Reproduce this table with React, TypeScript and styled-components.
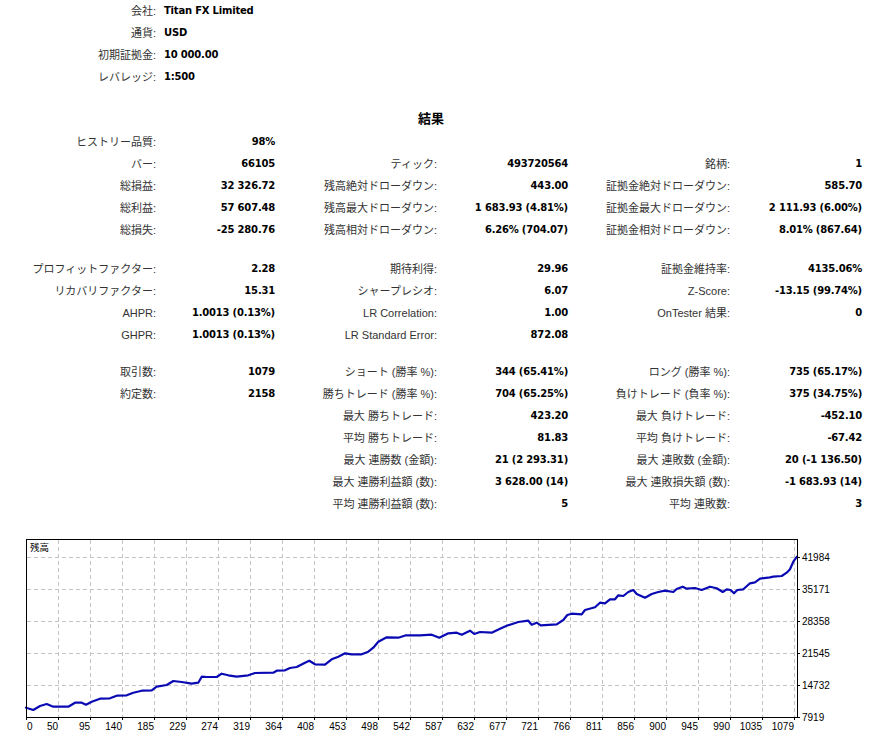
import React from "react";
import styled, { createGlobalStyle } from "styled-components";

const GlobalStyle = createGlobalStyle`
  html, body { margin: 0; padding: 0; background: #ffffff; }
  body { width: 890px; height: 745px; overflow: hidden; }
`;

const Page = styled.div`
  width: 890px;
  font-family: "Liberation Sans", "Noto Sans CJK JP", sans-serif;
  font-size: 11px;
  color: #000;
`;

const InfoGrid = styled.div`
  display: grid;
  grid-template-columns: 156px auto;
  column-gap: 8px;
  grid-auto-rows: 22px;
  align-items: center;
`;

const Label = styled.div`
  text-align: right;
  white-space: nowrap;
  color: #333;
  font-family: "Liberation Sans", "Noto Sans CJK JP", sans-serif;
  font-size: 11px;
  line-height: 22px;
  height: 22px;
`;

const Value = styled.div<{ $left?: boolean }>`
  text-align: ${(p) => (p.$left ? "left" : "right")};
  white-space: nowrap;
  color: #000;
  font-family: "DejaVu Sans", "Noto Sans CJK JP", sans-serif;
  font-weight: bold;
  font-size: 10px;
  letter-spacing: -0.2px;
  line-height: 22px;
  height: 22px;
`;

const Heading = styled.div`
  width: 862px;
  margin-top: 19px;
  height: 22px;
  line-height: 22px;
  text-align: center;
  font-family: "Noto Sans CJK JP", sans-serif;
  font-weight: bold;
  font-size: 13px;
  color: #000;
`;

const StatGrid = styled.div<{ $gap: number }>`
  display: grid;
  grid-template-columns: 156px 119px 162px 131px 162px 132px;
  grid-auto-rows: 22px;
  margin-top: ${(p) => p.$gap}px;
`;

const ChartWrap = styled.div`
  margin-top: 19px;
  height: 211px;
`;

type Cell = [string, string] | null;
type Row = [Cell, Cell, Cell];

const info: [string, string][] = [
  ["会社:", "Titan FX Limited"],
  ["通貨:", "USD"],
  ["初期証拠金:", "10 000.00"],
  ["レバレッジ:", "1:500"],
];

const section1: Row[] = [
  [["ヒストリー品質:", "98%"], null, null],
  [["バー:", "66105"], ["ティック:", "493720564"], ["銘柄:", "1"]],
  [["総損益:", "32 326.72"], ["残高絶対ドローダウン:", "443.00"], ["証拠金絶対ドローダウン:", "585.70"]],
  [["総利益:", "57 607.48"], ["残高最大ドローダウン:", "1 683.93 (4.81%)"], ["証拠金最大ドローダウン:", "2 111.93 (6.00%)"]],
  [["総損失:", "-25 280.76"], ["残高相対ドローダウン:", "6.26% (704.07)"], ["証拠金相対ドローダウン:", "8.01% (867.64)"]],
];

const section2: Row[] = [
  [["プロフィットファクター:", "2.28"], ["期待利得:", "29.96"], ["証拠金維持率:", "4135.06%"]],
  [["リカバリファクター:", "15.31"], ["シャープレシオ:", "6.07"], ["Z-Score:", "-13.15 (99.74%)"]],
  [["AHPR:", "1.0013 (0.13%)"], ["LR Correlation:", "1.00"], ["OnTester 結果:", "0"]],
  [["GHPR:", "1.0013 (0.13%)"], ["LR Standard Error:", "872.08"], null],
];

const section3: Row[] = [
  [["取引数:", "1079"], ["ショート (勝率 %):", "344 (65.41%)"], ["ロング (勝率 %):", "735 (65.17%)"]],
  [["約定数:", "2158"], ["勝ちトレード (勝率 %):", "704 (65.25%)"], ["負けトレード (負率 %):", "375 (34.75%)"]],
  [null, ["最大 勝ちトレード:", "423.20"], ["最大 負けトレード:", "-452.10"]],
  [null, ["平均 勝ちトレード:", "81.83"], ["平均 負けトレード:", "-67.42"]],
  [null, ["最大 連勝数 (金額):", "21 (2 293.31)"], ["最大 連敗数 (金額):", "20 (-1 136.50)"]],
  [null, ["最大 連勝利益額 (数):", "3 628.00 (14)"], ["最大 連敗損失額 (数):", "-1 683.93 (14)"]],
  [null, ["平均 連勝利益額 (数):", "5"], ["平均 連敗数:", "3"]],
];

function Section({ rows, gap }: { rows: Row[]; gap: number }) {
  return (
    <StatGrid $gap={gap}>
      {rows.map((row, ri) =>
        row.map((cell, ci) => (
          <React.Fragment key={`${ri}-${ci}`}>
            <Label>{cell ? cell[0] : ""}</Label>
            <Value>{cell ? cell[1] : ""}</Value>
          </React.Fragment>
        ))
      )}
    </StatGrid>
  );
}

const curve = `26,707.7 33.3,710 40,706 46.7,704 53.3,706.7 68.3,706.7 75,702.7 81.7,702.7 86,704.7 91.7,701.7 100,698.7 110,698.3 116.7,695.7 126.7,695.3 133.3,692.7 141.7,690.7 151.7,690.3 156.7,686.7 166.7,685 173.3,681 181.7,682 191.7,683.7 198.3,682.7 201.7,676.7 206.7,677 216.7,677 221.7,673.7 228.3,675.3 236.7,676.7 248.3,675.3 255,673 273.3,672.7 276.7,670.7 285,670.3 290,668 296.7,667 305,662.7 309.3,660.7 315,664.3 325,664.7 331.7,659.3 338.3,656.7 345,653.3 351.7,654.3 361.7,654.3 368.3,651.7 373.3,647.7 378.3,641.7 386.7,637.3 398.3,637.7 406,635.3 420,635.3 431.7,634.7 439.3,637.7 448.3,633.3 456.7,632.7 461.7,634.7 470,630.7 474.3,634 480,632 491.7,632.7 500,628.7 506.7,625.7 518.3,622 528.3,620.7 531.7,624.7 536.7,622.7 540.7,625.3 556.7,624.3 563.3,620 567.3,615 571.7,613.7 581.7,614.3 585,610 595,607.3 600,602.7 605,603.3 610,599.3 615,599.3 618.3,595.3 623.3,596 628.3,592 633.3,590 636.7,594 645,597.7 651.7,594 658.3,592 665,590.7 673.3,592 676.7,589 682.7,586.7 686.7,588.7 695,588 701.7,590 710,586.7 716.7,588.3 722.7,592 726.7,589.3 730.7,590 734,593.3 737.3,590 743.3,589.3 750,583.3 755,582.3 760,578.7 770,577.3 773.3,576.7 781.7,576 786.7,572.7 790,569.3 793.3,561.7 797,556.7`;

const xLabels = ["0", "50", "95", "140", "185", "229", "274", "319", "364", "408", "453", "498", "542", "587", "632", "677", "721", "766", "811", "856", "900", "945", "990", "1035", "1079"];
const yLabels = ["41984", "35171", "28358", "21545", "14732", "7919"];

function BalanceChart() {
  const left = 26;
  const right = 797;
  const top = 539;
  const bottom = 717;
  const vLines = Array.from({ length: 24 }, (_, i) => left + 32 * (i + 1));
  const hLines = [557, 589, 621, 653, 685];
  return (
    <svg width="890" height="211" viewBox="0 534 890 211" style={{ display: "block" }}>
      <g stroke="#c4c4c4" strokeWidth="1" strokeDasharray="4 3" shapeRendering="crispEdges">
        {vLines.map((x) => (
          <line key={`v${x}`} x1={x + 0.5} y1={top + 1} x2={x + 0.5} y2={bottom} />
        ))}
        {hLines.map((y) => (
          <line key={`h${y}`} x1={left + 1} y1={y + 0.5} x2={right} y2={y + 0.5} />
        ))}
      </g>
      <polyline
        points={curve}
        fill="none"
        stroke="#0a0ab4"
        strokeWidth="2.2"
        strokeLinejoin="round"
        strokeLinecap="round"
      />
      <g stroke="#000" strokeWidth="1" shapeRendering="crispEdges">
        <rect x={left + 0.5} y={top + 0.5} width={right - left} height={bottom - top} fill="none" />
        {[...hLines, bottom].map((y) => (
          <line key={`rt${y}`} x1={right} y1={y + 0.5} x2={right + 3} y2={y + 0.5} />
        ))}
        {[left, ...vLines].map((x) => (
          <line key={`bt${x}`} x1={x + 0.5} y1={bottom} x2={x + 0.5} y2={bottom + 3} />
        ))}
      </g>
      <text x={30} y={551} fontFamily="'Noto Sans CJK JP', sans-serif" fontSize="9.5" fill="#000">
        残高
      </text>
      <g fontFamily="'Liberation Sans', sans-serif" fontSize="10" fill="#000">
        {yLabels.map((t, i) => (
          <text key={t} x={802} y={557 + 32 * i + 4}>
            {t}
          </text>
        ))}
        {xLabels.map((t, i) =>
          i === 0 ? (
            <text key={t} x={27} y={730}>
              {t}
            </text>
          ) : (
            <text key={t} x={left + 32 * i} y={730} textAnchor="end">
              {t}
            </text>
          )
        )}
      </g>
    </svg>
  );
}

export default function App() {
  return (
    <Page>
      <GlobalStyle />
      <InfoGrid>
        {info.map(([l, v]) => (
          <React.Fragment key={l}>
            <Label>{l}</Label>
            <Value $left>{v}</Value>
          </React.Fragment>
        ))}
      </InfoGrid>
      <Heading>結果</Heading>
      <Section rows={section1} gap={2} />
      <Section rows={section2} gap={17} />
      <Section rows={section3} gap={15} />
      <ChartWrap>
        <BalanceChart />
      </ChartWrap>
    </Page>
  );
}
